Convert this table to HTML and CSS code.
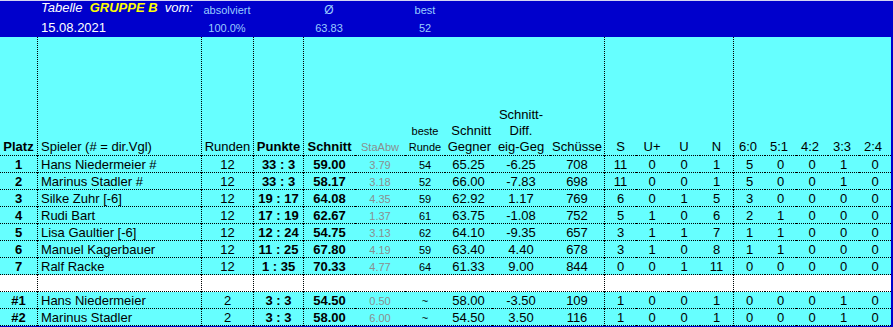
FILE: index.html
```html
<!DOCTYPE html>
<html lang="de">
<head>
<meta charset="utf-8">
<title>Tabelle GRUPPE B</title>
<link rel="stylesheet" href="styles.css">
</head>
<body>
<table class="sheet">
  <colgroup>
    <col class="c-a"><col class="c-b"><col class="c-c"><col class="c-d"><col class="c-e"><col class="c-f"><col class="c-g"><col class="c-h"><col class="c-i"><col class="c-j">
    <col class="c-s"><col class="c-up"><col class="c-u"><col class="c-n">
    <col class="c-r1"><col class="c-r2"><col class="c-r3"><col class="c-r4"><col class="c-r5">
  </colgroup>
  <tbody>
    <tr class="band band-top">
      <td></td>
      <td class="title"><span class="t-w">Tabelle  </span><span class="t-y">GRUPPE B</span><span class="t-w">  vom:</span></td>
      <td class="lbl">absolviert</td>
      <td></td>
      <td class="lbl lbl-o">Ø</td>
      <td></td>
      <td class="lbl">best</td>
      <td colspan="12"></td>
    </tr>
    <tr class="band band-bot">
      <td></td>
      <td class="date">15.08.2021</td>
      <td class="lbl">100.0%</td>
      <td></td>
      <td class="lbl">63.83</td>
      <td></td>
      <td class="lbl">52</td>
      <td colspan="12"></td>
    </tr>
    <tr class="grid head">
      <td>Platz</td>
      <td>Spieler (# = dir.Vgl)</td>
      <td>Runden</td>
      <td>Punkte</td>
      <td>Schnitt</td>
      <td>StaAbw</td>
      <td>beste<br>Runde</td>
      <td class="h-right">Schnitt<br>Gegner</td>
      <td>Schnitt-<br>Diff.<br>eig-Geg</td>
      <td>Schüsse</td>
      <td>S</td><td>U+</td><td>U</td><td>N</td>
      <td class="h-res">6:0</td><td class="h-res">5:1</td><td class="h-res">4:2</td><td class="h-res">3:3</td><td class="h-res">2:4</td>
    </tr>
    <tr class="grid row"><td>1</td><td>Hans Niedermeier #</td><td>12</td><td>33 : 3</td><td>59.00</td><td>3.79</td><td>54</td><td>65.25</td><td>-6.25</td><td>708</td><td>11</td><td>0</td><td>0</td><td>1</td><td>5</td><td>0</td><td>0</td><td>1</td><td>0</td></tr>
    <tr class="grid row"><td>2</td><td>Marinus Stadler #</td><td>12</td><td>33 : 3</td><td>58.17</td><td>3.18</td><td>52</td><td>66.00</td><td>-7.83</td><td>698</td><td>11</td><td>0</td><td>0</td><td>1</td><td>5</td><td>0</td><td>0</td><td>1</td><td>0</td></tr>
    <tr class="grid row"><td>3</td><td>Silke Zuhr [-6]</td><td>12</td><td>19 : 17</td><td>64.08</td><td>4.35</td><td>59</td><td>62.92</td><td>1.17</td><td>769</td><td>6</td><td>0</td><td>1</td><td>5</td><td>3</td><td>0</td><td>0</td><td>0</td><td>0</td></tr>
    <tr class="grid row"><td>4</td><td>Rudi Bart</td><td>12</td><td>17 : 19</td><td>62.67</td><td>1.37</td><td>61</td><td>63.75</td><td>-1.08</td><td>752</td><td>5</td><td>1</td><td>0</td><td>6</td><td>2</td><td>1</td><td>0</td><td>0</td><td>0</td></tr>
    <tr class="grid row"><td>5</td><td>Lisa Gaultier [-6]</td><td>12</td><td>12 : 24</td><td>54.75</td><td>3.13</td><td>62</td><td>64.10</td><td>-9.35</td><td>657</td><td>3</td><td>1</td><td>1</td><td>7</td><td>1</td><td>1</td><td>0</td><td>0</td><td>0</td></tr>
    <tr class="grid row"><td>6</td><td>Manuel Kagerbauer</td><td>12</td><td>11 : 25</td><td>67.80</td><td>4.19</td><td>59</td><td>63.40</td><td>4.40</td><td>678</td><td>3</td><td>1</td><td>0</td><td>8</td><td>1</td><td>1</td><td>0</td><td>0</td><td>0</td></tr>
    <tr class="grid row"><td>7</td><td>Ralf Racke</td><td>12</td><td>1 : 35</td><td>70.33</td><td>4.77</td><td>64</td><td>61.33</td><td>9.00</td><td>844</td><td>0</td><td>0</td><td>1</td><td>11</td><td>0</td><td>0</td><td>0</td><td>0</td><td>0</td></tr>
    <tr class="grid row blank"><td></td><td></td><td></td><td></td><td></td><td></td><td></td><td></td><td></td><td></td><td></td><td></td><td></td><td></td><td></td><td></td><td></td><td></td><td></td></tr>
    <tr class="grid row"><td>#1</td><td>Hans Niedermeier</td><td>2</td><td>3 : 3</td><td>54.50</td><td>0.50</td><td>~</td><td>58.00</td><td>-3.50</td><td>109</td><td>1</td><td>0</td><td>0</td><td>1</td><td>0</td><td>0</td><td>0</td><td>1</td><td>0</td></tr>
    <tr class="grid row"><td>#2</td><td>Marinus Stadler</td><td>2</td><td>3 : 3</td><td>58.00</td><td>6.00</td><td>~</td><td>54.50</td><td>3.50</td><td>116</td><td>1</td><td>0</td><td>0</td><td>1</td><td>0</td><td>0</td><td>0</td><td>1</td><td>0</td></tr>
  </tbody>
</table>
</body>
</html>
```
FILE: styles.css
```css
html, body {
  margin: 0;
  padding: 0;
}
body {
  background: #0000cc;
  border-top: 1px solid #d4d4f2;
  font-family: "Liberation Sans", Arial, sans-serif;
  font-size: 13px;
  color: #000;
}
.sheet {
  border-collapse: separate;
  border-spacing: 0;
  table-layout: fixed;
  width: 891px;
}
.c-a { width: 37px; }
.c-b { width: 164px; }
.c-c { width: 52px; }
.c-d { width: 50px; }
.c-e { width: 52px; }
.c-f { width: 50px; }
.c-g { width: 40px; }
.c-h { width: 47px; }
.c-i { width: 58px; }
.c-j { width: 54px; }
.c-s { width: 32px; }
.c-up { width: 32px; }
.c-u { width: 32px; }
.c-n { width: 33px; }
.c-r1 { width: 32px; }
.c-r2 { width: 31px; }
.c-r3 { width: 32px; }
.c-r4 { width: 31px; }
.c-r5 { width: 32px; }

.sheet td {
  padding: 0;
  box-sizing: border-box;
  white-space: nowrap;
  overflow: hidden;
  text-align: center;
  vertical-align: bottom;
}

/* top blue band */
.band td {
  background: #0000cc;
  height: 18px;
  color: #99ccff;
  font-size: 11px;
  line-height: 14px;
}
.band-top td { vertical-align: top; padding-top: 2px; }
.band-bot td { vertical-align: middle; }
.band .title {
  text-align: left;
  padding-left: 4px;
  font-size: 13px;
  font-style: italic;
  white-space: pre;
  vertical-align: top;
  padding-top: 0;
}
.t-w { color: #ffffff; }
.t-y { color: #ffff00; font-weight: bold; }
.band .date {
  text-align: left;
  padding-left: 4px;
  font-size: 13px;
  color: #ffffff;
}
.band .lbl-o { font-size: 12px; }

/* grid */
.grid td {
  background: #66ffff;
  border-bottom: 1px dotted #000;
}
.grid td:nth-child(2),
.grid td:nth-child(3),
.grid td:nth-child(4),
.grid td:nth-child(5),
.grid td:nth-child(11),
.grid td:nth-child(15) {
  border-left: 1px dotted #000;
}
.grid td:nth-child(1),
.grid td:nth-child(4),
.grid td:nth-child(5) {
  font-weight: bold;
}
.grid td:nth-child(2) {
  text-align: left;
  padding-left: 3px;
}
.grid td:nth-child(6) {
  font-size: 11px;
  color: #8a8f8f;
}
.grid td:nth-child(7) {
  font-size: 11px;
}

.head td {
  height: 119px;
  line-height: 16px;
  padding-bottom: 0;
}
.head td.h-right {
  text-align: right;
  padding-right: 1px;
  overflow: visible;
}
.head td.h-res {
  text-align: left;
  padding-left: 5px;
}
.row td {
  height: 17px;
  line-height: 14px;
}
.row.blank td {
  background: #ffffff;
}
```
